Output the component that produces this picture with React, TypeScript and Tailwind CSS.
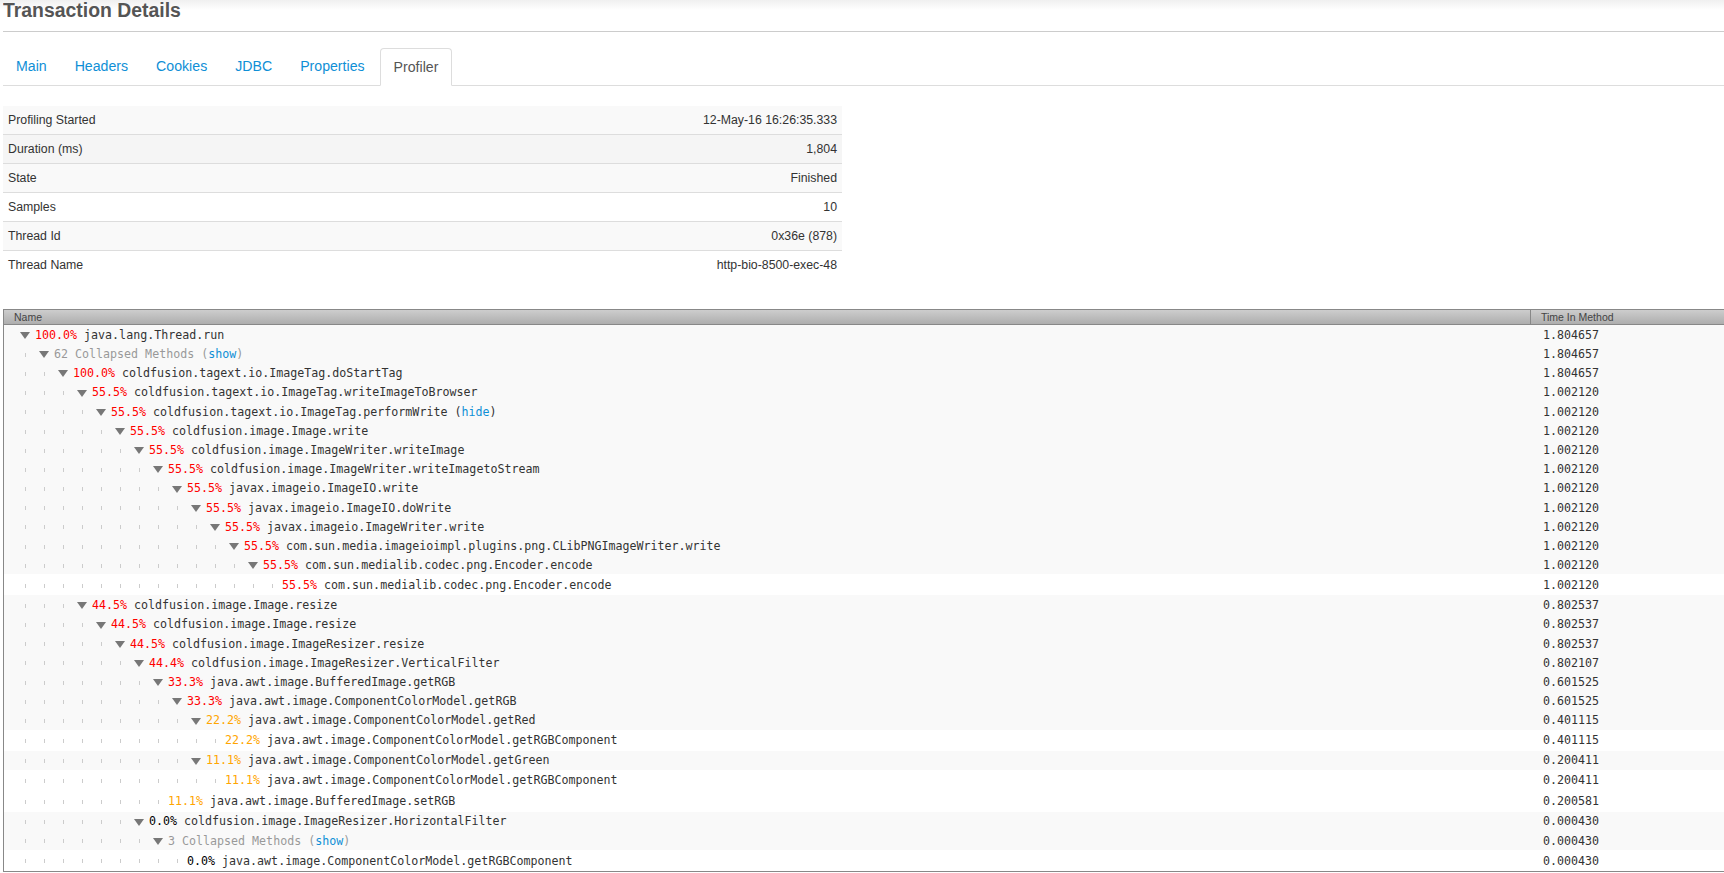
import React from "react";

type Row = { level: number; pct: string; name: string; time: string; arrow?: boolean; link?: string; collapsed?: string };

const R = (level: number, pct: string, name: string, time: string, link?: string): Row => ({ level, pct, name, time, arrow: true, link });
const L = (level: number, pct: string, name: string, time: string): Row => ({ level, pct, name, time, arrow: false });

const rows: Row[] = [
  R(0, "100.0%", "java.lang.Thread.run", "1.804657"),
  { level: 1, pct: "", name: "", collapsed: "62", time: "1.804657", arrow: true },
  R(2, "100.0%", "coldfusion.tagext.io.ImageTag.doStartTag", "1.804657"),
  R(3, "55.5%", "coldfusion.tagext.io.ImageTag.writeImageToBrowser", "1.002120"),
  R(4, "55.5%", "coldfusion.tagext.io.ImageTag.performWrite", "1.002120", "hide"),
  R(5, "55.5%", "coldfusion.image.Image.write", "1.002120"),
  R(6, "55.5%", "coldfusion.image.ImageWriter.writeImage", "1.002120"),
  R(7, "55.5%", "coldfusion.image.ImageWriter.writeImagetoStream", "1.002120"),
  R(8, "55.5%", "javax.imageio.ImageIO.write", "1.002120"),
  R(9, "55.5%", "javax.imageio.ImageIO.doWrite", "1.002120"),
  R(10, "55.5%", "javax.imageio.ImageWriter.write", "1.002120"),
  R(11, "55.5%", "com.sun.media.imageioimpl.plugins.png.CLibPNGImageWriter.write", "1.002120"),
  R(12, "55.5%", "com.sun.medialib.codec.png.Encoder.encode", "1.002120"),
  L(13, "55.5%", "com.sun.medialib.codec.png.Encoder.encode", "1.002120"),
  R(3, "44.5%", "coldfusion.image.Image.resize", "0.802537"),
  R(4, "44.5%", "coldfusion.image.Image.resize", "0.802537"),
  R(5, "44.5%", "coldfusion.image.ImageResizer.resize", "0.802537"),
  R(6, "44.4%", "coldfusion.image.ImageResizer.VerticalFilter", "0.802107"),
  R(7, "33.3%", "java.awt.image.BufferedImage.getRGB", "0.601525"),
  R(8, "33.3%", "java.awt.image.ComponentColorModel.getRGB", "0.601525"),
  R(9, "22.2%", "java.awt.image.ComponentColorModel.getRed", "0.401115"),
  L(10, "22.2%", "java.awt.image.ComponentColorModel.getRGBComponent", "0.401115"),
  R(9, "11.1%", "java.awt.image.ComponentColorModel.getGreen", "0.200411"),
  L(10, "11.1%", "java.awt.image.ComponentColorModel.getRGBComponent", "0.200411"),
  L(7, "11.1%", "java.awt.image.BufferedImage.setRGB", "0.200581"),
  R(6, "0.0%", "coldfusion.image.ImageResizer.HorizontalFilter", "0.000430"),
  { level: 7, pct: "", name: "", collapsed: "3", time: "0.000430", arrow: true },
  L(8, "0.0%", "java.awt.image.ComponentColorModel.getRGBComponent", "0.000430"),
];

const info = [
  ["Profiling Started", "12-May-16 16:26:35.333", "bg-[#f9f9f9]"],
  ["Duration (ms)", "1,804", "bg-[#f5f5f5]"],
  ["State", "Finished", "bg-[#f9f9f9]"],
  ["Samples", "10", "bg-white"],
  ["Thread Id", "0x36e (878)", "bg-[#f9f9f9]"],
  ["Thread Name", "http-bio-8500-exec-48", "bg-white"],
];

const tabs = ["Main", "Headers", "Cookies", "JDBC", "Properties"];

function pctColor(p: string) {
  const v = parseFloat(p);
  if (v >= 33) return "text-[#ff0000]";
  if (v >= 10) return "text-[#ffa500]";
  return "text-black";
}

function TreeRow({ row }: { row: Row }) {
  const ticks = row.arrow ? row.level : row.level + 1;
  return (
    <div className={`flex pt-[2px] ${row.arrow ? "bg-[#f9f9f9] h-[19.2px]" : "bg-white h-[20.9px]"}`}>
      <div className="flex-1 flex items-center pl-[12px] min-w-0">
        {Array.from({ length: ticks }).map((_, i) => (
          <span key={i} className="w-[19px] shrink-0 flex pl-[9px]">
            <span className="w-px h-[4px] bg-[#cccccc]" />
          </span>
        ))}
        {row.arrow && (
          <span className="w-[19px] shrink-0 flex pl-[4px]">
            <svg width="10" height="7" viewBox="0 0 10 7" className="shrink-0">
              <path d="M0 0H10L5 7Z" fill="#777777" />
            </svg>
          </span>
        )}
        <span className="whitespace-pre">
          {row.collapsed ? (
            <span className="text-[#999999]">
              {row.collapsed} Collapsed Methods (<span className="text-[#0f8fd6]">show</span>)
            </span>
          ) : (
            <>
              <span className={pctColor(row.pct)}>{row.pct}</span>
              <span className="text-[#333333]"> {row.name}</span>
              {row.link && (
                <span className="text-[#333333]">
                  {" ("}
                  <span className="text-[#0f8fd6]">{row.link}</span>)
                </span>
              )}
            </>
          )}
        </span>
      </div>
      <div className="w-[194px] shrink-0 flex items-center pl-[13px] text-[#333333]">{row.time}</div>
    </div>
  );
}

export default function App() {
  return (
    <div className="h-[873px] overflow-hidden bg-white font-['Liberation_Sans',Arial,sans-serif] text-[#333333]">
      <div className="h-[32px] pl-[3px] bg-gradient-to-b from-[#f0f0f0] to-white to-[10px]">
        <div className="h-[32px] border-b border-[#cccccc] overflow-hidden">
          <h1 className="text-[19.4px] font-bold text-[#555555] leading-[21px]">Transaction Details</h1>
        </div>
      </div>
      <div className="pl-[3px] pt-[16px]">
        <div className="flex h-[38px] border-b border-[#dddddd] text-[14.15px]">
          {tabs.map((t) => (
            <div key={t} className="px-[13px] pt-[1px] mr-[2px] h-[37px] flex items-center text-[#0f8fd6]">{t}</div>
          ))}
          <div className="px-[13px] pt-[1px] h-[38px] flex items-center text-[#555555] bg-white border border-[#dddddd] border-b-white rounded-t-[4px]">Profiler</div>
        </div>
      </div>
      <div className="ml-[3px] mt-[20px] w-[839px] text-[12.3px]">
        {info.map(([k, v, bg], i) => (
          <div key={k} className={`flex justify-between items-center h-[29px] px-[5px] border-b ${bg} ${i < 5 ? "border-[#dddddd]" : "border-transparent"}`}>
            <span>{k}</span>
            <span>{v}</span>
          </div>
        ))}
      </div>
      <div className="ml-[3px] mt-[29px] border border-r-0 border-[#888888] font-['DejaVu_Sans_Mono',monospace] text-[11.65px]">
        <div className="flex h-[15px] bg-gradient-to-b from-[#cdcdcd] to-[#aeaeae] border-b border-[#888888] font-['Liberation_Sans',Arial,sans-serif] text-[10.5px] text-[#444444] leading-[15px]">
          <div className="flex-1 pl-[10px]">Name</div>
          <div className="w-[194px] shrink-0 pl-[10px] border-l border-[#888888]">Time In Method</div>
        </div>
        {rows.map((r, i) => (
          <TreeRow key={i} row={r} />
        ))}
      </div>
    </div>
  );
}
